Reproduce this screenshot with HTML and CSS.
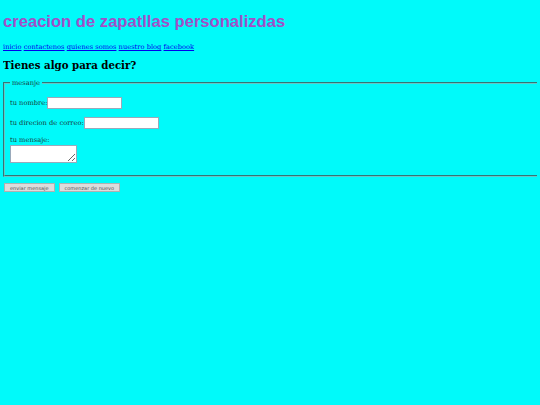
FILE: index.html
```html
<!DOCTYPE html>
<html>
<head>
<meta charset="utf-8">
<link rel="stylesheet" href="styles.css">
</head>
<body>
<h1 class="title">creacion de zapatllas personalizdas</h1>
<nav class="nav"><a href="#">inicio</a> <a href="#">contactenos</a> <a href="#">quienes somos</a> <a href="#">nuestro blog</a> <a href="#">facebook</a></nav>
<h2 class="sub">Tienes algo para decir?</h2>
<form class="form">
<fieldset class="box">
<legend class="legend">mesanje</legend>
<div class="row"><label>tu nombre:</label><input class="field" type="text"></div>
<div class="row"><label>tu direcion de correo:</label><input class="field" type="text"></div>
<div class="row col"><label>tu mensaje:</label><textarea class="area"></textarea></div>
</fieldset>
<div class="buttons"><button type="submit" class="btn">enviar mensaje</button><button type="reset" class="btn">comenzar de nuevo</button></div>
</form>
</body>
</html>
```
FILE: styles.css
```css
html { overflow: hidden; }
body {
  margin: 0 3px;
  background: #00fafa;
  font-family: "DejaVu Serif", serif;
  font-size: 6.7px;
  color: #1a3a3a;
}
.title {
  margin: 12px 0 0;
  font-family: "Liberation Sans", Arial, sans-serif;
  font-size: 16.6px;
  font-weight: bold;
  color: #a050c8;
  line-height: 20px;
}
.nav {
  margin-top: 10px;
  line-height: 10px;
}
.nav a { color: #0000ee; }
.sub {
  margin: 6px 0 0;
  font-size: 10.2px;
  font-weight: bold;
  color: #000;
  line-height: 14px;
}
.form { margin: 0; }
.box {
  margin: 7px -20px 0 0;
  padding: 2px 5px 12px;
  border: 2px groove #60c8c8;
  border-width: 2px 0 2px 2px;
}
.legend { padding: 0 2px; color: #1a3a3a; }
.row {
  display: flex;
  align-items: center;
  margin-top: 8px;
}
.col {
  flex-direction: column;
  align-items: flex-start;
  margin-top: 7px;
}
.field {
  width: 71px;
  height: 8px;
  border: 1px solid #9ab;
  padding: 1px;
  margin: 0;
  background: #fff;
}
.area {
  width: 63px;
  height: 14px;
  border: 1px solid #9ab;
  margin: 1px 0 0;
  padding: 1px;
  resize: both;
  background: #fff;
}
.buttons {
  display: flex;
  gap: 4px;
  margin-top: 6px;
  padding-left: 1px;
}
.btn {
  font-family: "DejaVu Sans", sans-serif;
  font-size: 5px;
  height: 9px;
  padding: 0 5px;
  background: #dcdcdc;
  border: 1px solid #b0b0b0;
  color: #555;
}
```
